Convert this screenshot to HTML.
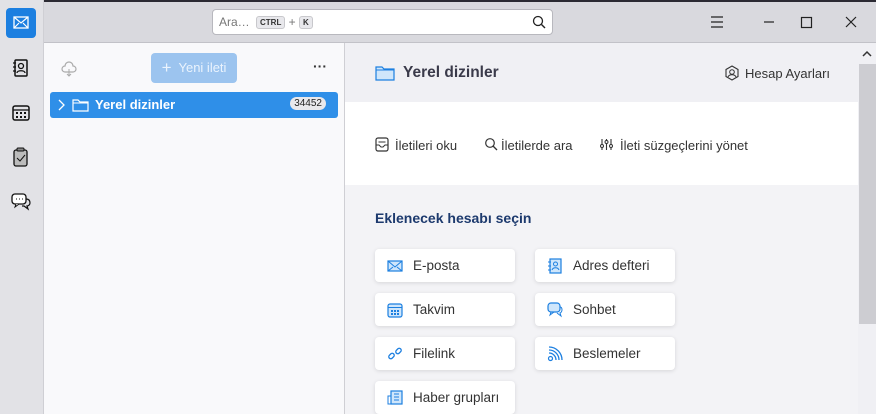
<!DOCTYPE html>
<html><head><meta charset="utf-8"><style>
*{box-sizing:border-box;margin:0;padding:0}
body{width:876px;height:414px;overflow:hidden;font-family:"Liberation Sans",sans-serif;background:#f3f3f6;position:relative;color:#1a1a2e}
.abs{position:absolute}
.top{left:0;top:0;width:876px;height:43px;background:#d9d9de;border-top:2px solid #2b2a33;border-bottom:1px solid #c2c2c8}
.side{left:0;top:0;width:44px;height:414px;background:#e2e2e6;border-right:1px solid #cfcfd4}
.search{left:212px;top:9px;width:341px;height:26px;background:#fff;border:1px solid #b8b8be;border-radius:4px;font-size:12px;color:#777}
.kbd{display:inline-block;background:#e8e8ec;border:1px solid #c8c8cc;border-radius:3px;font-size:8px;font-weight:bold;color:#333;padding:1px 3px;vertical-align:1px}
.folder{left:44px;top:43px;width:301px;height:371px;background:#f9f9fb;border-right:1px solid #cfcfd4}
.btn{background:#fff;border-radius:4px;box-shadow:0 1px 4px rgba(0,0,0,.12);width:140px;height:33px;font-size:13.5px;color:#333;display:flex;align-items:center;padding-left:12px}
.btn svg{margin-right:10px}
</style></head><body>
<div class="abs top"></div>
<div class="abs side"></div>
<div class="abs" style="left:6px;top:8px;width:30px;height:30px;background:#1c7fe0;border-radius:4px">
<svg width="30" height="30"><rect x="8" y="9" width="14" height="11" fill="none" stroke="#fff" stroke-width="1.3"/><path d="M8 9l7 6 7-6M8 20l5-5M22 20l-5-5" fill="none" stroke="#fff" stroke-width="1.2"/></svg></div>
<svg class="abs" style="left:12px;top:58px" width="18" height="20"><rect x="3" y="2" width="12" height="16" rx="1" fill="none" stroke="#111" stroke-width="1.5"/><circle cx="9" cy="8" r="2.5" fill="none" stroke="#111" stroke-width="1.3"/><path d="M5 15c0-3 8-3 8 0" fill="none" stroke="#111" stroke-width="1.3"/><path d="M1 5h3M1 9h3M1 13h3" stroke="#111" stroke-width="1.3"/></svg>
<svg class="abs" style="left:11px;top:104px" width="20" height="18"><rect x="2" y="2" width="16" height="14" rx="2" fill="none" stroke="#111" stroke-width="1.5"/><path d="M2 6h16" stroke="#111" stroke-width="1.3"/><g fill="#111"><rect x="5" y="8" width="2" height="2"/><rect x="9" y="8" width="2" height="2"/><rect x="13" y="8" width="2" height="2"/><rect x="5" y="12" width="2" height="2"/><rect x="9" y="12" width="2" height="2"/><rect x="13" y="12" width="2" height="2"/></g></svg>
<svg class="abs" style="left:12px;top:147px" width="18" height="20"><rect x="2" y="3" width="13" height="16" rx="2" fill="#bbb" stroke="#111" stroke-width="1.3"/><rect x="5" y="1" width="7" height="3" rx="1" fill="#888" stroke="#111"/><path d="M5 11l3 3 5-6" fill="none" stroke="#111"/></svg>
<svg class="abs" style="left:10px;top:192px" width="22" height="20"><rect x="2" y="2" width="14" height="10" rx="3" fill="#fff" stroke="#111" stroke-width="1.3"/><path d="M6 12l-1 3 4-3" fill="#fff" stroke="#111"/><path d="M16 7c3 0 4 2 4 4s-2 3-3 3l1 3-4-3h-2" fill="none" stroke="#111" stroke-width="1.2"/><path d="M6 7h1M9 7h1M12 7h1" stroke="#111"/></svg>
<div class="abs search"><span style="position:absolute;left:6px;top:5px">Ara…</span><span style="position:absolute;left:43px;top:5px"><span class="kbd">CTRL</span> + <span class="kbd">K</span></span>
<svg style="position:absolute;right:6px;top:5px" width="14" height="14"><circle cx="6" cy="6" r="4.5" fill="none" stroke="#222" stroke-width="1.3"/><path d="M9.5 9.5l3.5 3.5" stroke="#222" stroke-width="1.4"/></svg></div>
<svg class="abs" style="left:708px;top:14px" width="160" height="16"><path d="M3 3h12M3 8h12M3 13h12" stroke="#222" stroke-width="1.2"/><path d="M56 8h10" stroke="#222" stroke-width="1.2"/><rect x="93.5" y="3.5" width="10" height="10" fill="none" stroke="#222" stroke-width="1.2"/><path d="M138 3l10 10M148 3l-10 10" stroke="#222" stroke-width="1.2"/></svg>
<div class="abs folder"></div>
<svg class="abs" style="left:60px;top:60px" width="18" height="18"><path d="M5 12a3 3 0 0 1 0-6 4 4 0 0 1 8 0 3 3 0 0 1 0 6z" fill="none" stroke="#aaa" stroke-width="1.2"/><path d="M9 9v7M7 14l2 2 2-2" fill="none" stroke="#aaa"/></svg>
<div class="abs" style="left:151px;top:53px;width:86px;height:30px;background:#9cc4ef;border-radius:4px;color:#eaf3fd;font-size:13px;line-height:30px;text-align:center"><span style="font-size:17px;vertical-align:-1px">+</span>&nbsp; Yeni ileti</div>
<div class="abs" style="left:313px;top:58px;font-size:14px;font-weight:bold;color:#333">···</div>
<div class="abs" style="left:50px;top:92px;width:288px;height:26px;background:#2f8fe8;border-radius:3px;color:#fff;font-size:13px;font-weight:bold">
<svg style="position:absolute;left:6px;top:7px" width="10" height="12"><path d="M3 1l5 5-5 5" fill="none" stroke="#fff" stroke-width="1.3"/></svg>
<svg style="position:absolute;left:22px;top:6px" width="18" height="14"><path d="M1 2h5l2 2h8v9H1z" fill="none" stroke="#fff" stroke-width="1.2"/><path d="M1 5h15" stroke="#fff"/></svg>
<span style="position:absolute;left:45px;top:5px">Yerel dizinler</span>
<span style="position:absolute;right:12px;top:5px;background:#e8e8ec;color:#222;font-size:10px;font-weight:normal;border-radius:8px;padding:1px 4px">34452</span></div>
<div class="abs" style="left:345px;top:43px;width:513px;height:59px;background:#f0f0f4"></div>
<div class="abs" style="left:345px;top:102px;width:513px;height:83px;background:#fff"></div>
<div class="abs" style="left:858px;top:43px;width:18px;height:371px;background:#f0f0f4"><div style="position:absolute;left:1px;top:21px;width:17px;height:260px;background:#cdcdd2"></div>
<svg style="position:absolute;left:4px;top:7px" width="10" height="8"><path d="M1 6l4-4 4 4" fill="none" stroke="#333" stroke-width="1.5"/></svg></div>
<svg class="abs" style="left:375px;top:65px" width="20" height="16"><path d="M1 2h6l2 2h10v11H1z" fill="#cfe6fb" stroke="#1c7fe0" stroke-width="1.2"/><path d="M1 5h18" stroke="#1c7fe0"/></svg>
<div class="abs" style="left:403px;top:64px;font-size:15.5px;font-weight:bold;color:#3a3a4a">Yerel dizinler</div>
<svg class="abs" style="left:724px;top:65px" width="16" height="16"><path d="M8 1l6 3.5v7L8 15l-6-3.5v-7z" fill="none" stroke="#333" stroke-width="1.1"/><circle cx="8" cy="7" r="2.3" fill="none" stroke="#333"/><path d="M4 12c1-3 7-3 8 0" fill="none" stroke="#333"/></svg>
<div class="abs" style="left:745px;top:66px;font-size:13px;color:#333">Hesap Ayarları</div>
<svg class="abs" style="left:375px;top:137px" width="14" height="15"><rect x="1" y="1" width="12" height="13" rx="2" fill="none" stroke="#333" stroke-width="1.2"/><path d="M1 8h3l2 2h2l2-2h3M3.5 5h7" fill="none" stroke="#333"/></svg>
<div class="abs" style="left:395px;top:138px;font-size:13px;color:#333">İletileri oku</div>
<svg class="abs" style="left:484px;top:137px" width="14" height="14"><circle cx="6" cy="6" r="4.3" fill="none" stroke="#333" stroke-width="1.2"/><path d="M9 9l4 4" stroke="#333" stroke-width="1.3"/></svg>
<div class="abs" style="left:501px;top:138px;font-size:13px;color:#333">İletilerde ara</div>
<svg class="abs" style="left:600px;top:138px" width="13" height="13"><path d="M2 1v11M6.5 1v11M11 1v11" stroke="#333" stroke-width="1.1"/><circle cx="2" cy="8" r="1.5" fill="#fff" stroke="#333"/><circle cx="6.5" cy="4" r="1.5" fill="#fff" stroke="#333"/><circle cx="11" cy="8" r="1.5" fill="#fff" stroke="#333"/></svg>
<div class="abs" style="left:620px;top:138px;font-size:13px;color:#333">İleti süzgeçlerini yönet</div>
<div class="abs" style="left:375px;top:210px;font-size:14px;font-weight:bold;color:#1d3a6e">Eklenecek hesabı seçin</div>
<div class="abs btn" style="left:375px;top:249px"><svg width="16" height="14"><rect x="1" y="2" width="14" height="10" fill="#cfe6fb" stroke="#1c7fe0" stroke-width="1.2"/><path d="M1 2l7 6 7-6M1 12l5-4M15 12l-5-4" fill="none" stroke="#1c7fe0"/></svg>E-posta</div>
<div class="abs btn" style="left:535px;top:249px"><svg width="16" height="16"><rect x="3" y="1" width="11" height="14" fill="#cfe6fb" stroke="#1c7fe0" stroke-width="1.2"/><circle cx="8.5" cy="6" r="2" fill="none" stroke="#1c7fe0"/><path d="M5 12c1-3 6-3 7 0M1 4h3M1 8h3M1 12h3" fill="none" stroke="#1c7fe0"/></svg>Adres defteri</div>
<div class="abs btn" style="left:375px;top:293px"><svg width="16" height="16"><rect x="1" y="2" width="14" height="13" rx="2" fill="#cfe6fb" stroke="#1c7fe0" stroke-width="1.2"/><path d="M1 5.5h14" stroke="#1c7fe0"/><g fill="#1c7fe0"><rect x="4" y="8" width="2" height="2"/><rect x="7" y="8" width="2" height="2"/><rect x="10" y="8" width="2" height="2"/><rect x="4" y="11" width="2" height="2"/><rect x="7" y="11" width="2" height="2"/><rect x="10" y="11" width="2" height="2"/></g></svg>Takvim</div>
<div class="abs btn" style="left:535px;top:293px"><svg width="16" height="16"><rect x="1" y="1" width="12" height="9" rx="3" fill="#cfe6fb" stroke="#1c7fe0" stroke-width="1.2"/><path d="M4 10l-1 3 4-3M13 5c2 0 2 2 2 3s-1 3-2 3l1 3-4-3" fill="none" stroke="#1c7fe0"/></svg>Sohbet</div>
<div class="abs btn" style="left:375px;top:337px"><svg width="16" height="16"><rect x="1.5" y="8" width="6" height="4" rx="2" transform="rotate(-45 4.5 10)" fill="none" stroke="#1c7fe0" stroke-width="1.3"/><rect x="8.5" y="3" width="6" height="4" rx="2" transform="rotate(-45 11.5 5)" fill="none" stroke="#1c7fe0" stroke-width="1.3"/></svg>Filelink</div>
<div class="abs btn" style="left:535px;top:337px"><svg width="16" height="16"><circle cx="3.5" cy="12.5" r="2" fill="none" stroke="#1c7fe0" stroke-width="1.2"/><path d="M2 7a7 7 0 0 1 7 7M2 4a10 10 0 0 1 10 10M2 1a13 13 0 0 1 13 13" fill="none" stroke="#1c7fe0" stroke-width="1.3"/></svg>Beslemeler</div>
<div class="abs btn" style="left:375px;top:381px"><svg width="16" height="16"><rect x="4" y="1" width="11" height="13" fill="#cfe6fb" stroke="#1c7fe0" stroke-width="1.2"/><path d="M4 6H1v8h3M7 4h5M7 7h5M7 10h5" fill="none" stroke="#1c7fe0"/></svg>Haber grupları</div>
</body></html>
